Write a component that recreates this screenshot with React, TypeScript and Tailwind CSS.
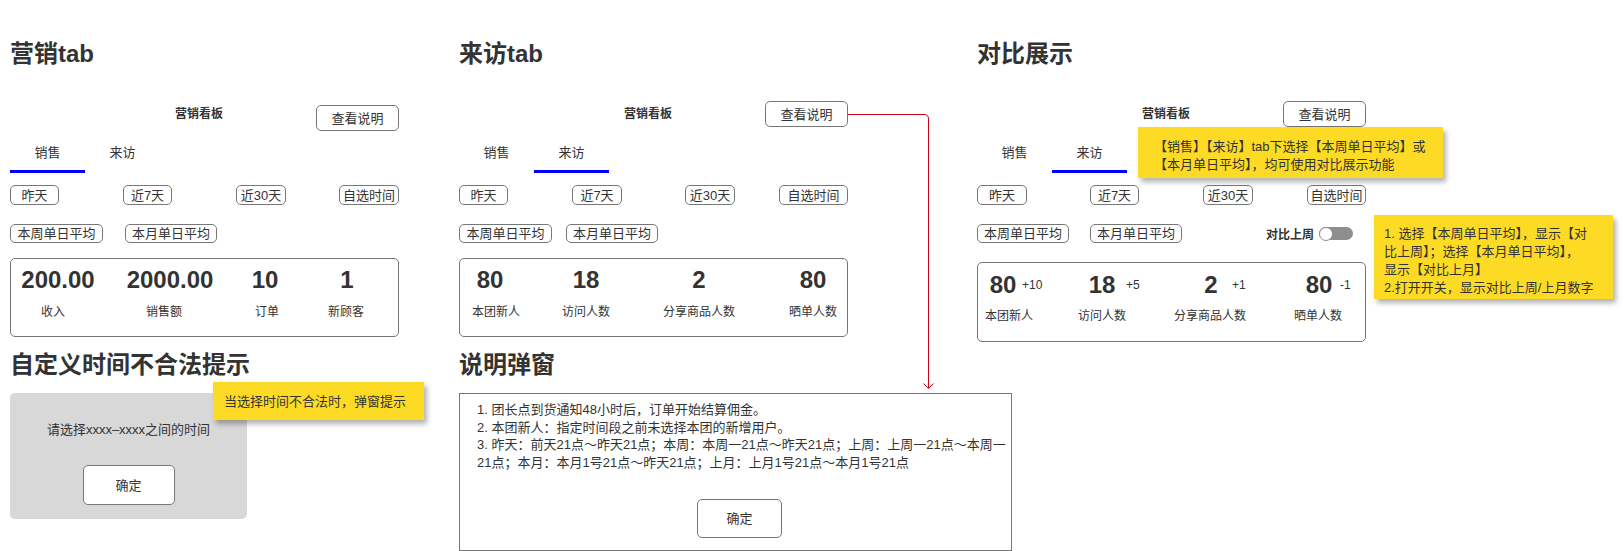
import React from "react";

type P = { className?: string; children?: React.ReactNode };

function Btn({ className = "", children }: P) {
  return (
    <div
      className={`flex shrink-0 items-center justify-center whitespace-nowrap rounded-[5px] border border-[#777] text-[13px] leading-none text-[#333] ${className}`}
    >
      {children}
    </div>
  );
}

function Anchor({ className = "", children }: P) {
  return <div className={`flex w-0 shrink-0 whitespace-nowrap ${className}`}>{children}</div>;
}

function Title({ className = "", children }: P) {
  return (
    <div className={`h-[32px] whitespace-nowrap text-[24px] font-bold leading-[32px] text-[#333] ${className}`}>
      {children}
    </div>
  );
}

function Header({ btnClass }: { btnClass: string }) {
  return (
    <div className="mt-[31px] flex h-[30px] items-start">
      <div className="ml-[165px] mt-[5px] text-[12px] font-semibold leading-4 text-[#333]">营销看板</div>
      <Btn className={`ml-auto h-[26px] w-[83px] ${btnClass}`}>查看说明</Btn>
    </div>
  );
}

function Tabs({ active }: { active: number }) {
  return (
    <div className="mt-[12px] flex h-[30px]">
      {["销售", "来访"].map((t, i) => (
        <div key={t} className="flex w-[75px] flex-col items-center">
          <div className="h-5 text-[13px] leading-5 text-[#333]">{t}</div>
          <div className={`mt-[7px] h-[3px] w-full ${i === active ? "bg-[#0000ff]" : "bg-transparent"}`} />
        </div>
      ))}
    </div>
  );
}

const numRow = "flex h-[28px] items-center text-[24px] font-bold leading-[28px] text-[#333]";
const labRow = "flex h-4 items-center text-[12px] leading-4 text-[#333]";

export default function App() {
  return (
    <div className="relative flex h-[551px] w-[1624px] overflow-hidden bg-white pl-[10px] [font-family:'Liberation_Sans','Noto_Sans_CJK_SC',sans-serif]">
      {/* Column 1 */}
      <div className="flex w-[449px] shrink-0 flex-col">
        <div className="flex w-[389px] flex-col">
          <Title className="mt-[38px]">营销tab</Title>
          <Header btnClass="mt-[4px]" />
          <Tabs active={0} />
          <div className="mt-[12px] flex h-[20px]">
            <Btn className="h-[20px] w-[49px]">昨天</Btn>
            <Btn className="ml-[64px] h-[20px] w-[49px]">近7天</Btn>
            <Btn className="ml-[64px] h-[20px] w-[50px]">近30天</Btn>
            <Btn className="ml-[53px] h-[20px] w-[60px]">自选时间</Btn>
          </div>
          <div className="mt-[19px] flex h-[19px]">
            <Btn className="h-[19px] w-[93px]">本周单日平均</Btn>
            <Btn className="ml-[22px] h-[19px] w-[92px]">本月单日平均</Btn>
          </div>
          <div className="mt-[15px] h-[79px] rounded-[5px] border border-[#777] pt-[7px]">
            <div className={numRow}>
              <Anchor className="ml-[47px] justify-center">200.00</Anchor>
              <Anchor className="ml-[112px] justify-center">2000.00</Anchor>
              <Anchor className="ml-[95px] justify-center">10</Anchor>
              <Anchor className="ml-[82px] justify-center">1</Anchor>
            </div>
            <div className={`mt-[10px] ${labRow}`}>
              <Anchor className="ml-[42px] justify-center">收入</Anchor>
              <Anchor className="ml-[111px] justify-center">销售额</Anchor>
              <Anchor className="ml-[103px] justify-center">订单</Anchor>
              <Anchor className="ml-[79px] justify-center">新顾客</Anchor>
            </div>
          </div>
          <Title className="mt-[12px]">自定义时间不合法提示</Title>
          <div className="mt-[12px] flex h-[126px] w-[237px] flex-col items-center rounded-[5px] bg-[#d8d8d8]">
            <div className="mt-[27px] h-5 whitespace-nowrap text-[13px] leading-5 text-[#333]">请选择xxxx–xxxx之间的时间</div>
            <Btn className="mt-[25px] h-[40px] w-[92px] bg-white">确定</Btn>
          </div>
        </div>
      </div>

      {/* Column 2 */}
      <div className="flex w-[518px] shrink-0 flex-col">
        <div className="flex w-[389px] flex-col">
          <Title className="mt-[38px]">来访tab</Title>
          <Header btnClass="mt-0" />
          <Tabs active={1} />
          <div className="mt-[12px] flex h-[20px]">
            <Btn className="h-[20px] w-[49px]">昨天</Btn>
            <Btn className="ml-[64px] h-[20px] w-[50px]">近7天</Btn>
            <Btn className="ml-[63px] h-[20px] w-[50px]">近30天</Btn>
            <Btn className="ml-[44px] h-[20px] w-[69px]">自选时间</Btn>
          </div>
          <div className="mt-[19px] flex h-[19px]">
            <Btn className="h-[19px] w-[93px]">本周单日平均</Btn>
            <Btn className="ml-[14px] h-[19px] w-[92px]">本月单日平均</Btn>
          </div>
          <div className="mt-[15px] h-[79px] rounded-[5px] border border-[#777] pt-[7px]">
            <div className={numRow}>
              <Anchor className="ml-[30px] justify-center">80</Anchor>
              <Anchor className="ml-[96px] justify-center">18</Anchor>
              <Anchor className="ml-[113px] justify-center">2</Anchor>
              <Anchor className="ml-[114px] justify-center">80</Anchor>
            </div>
            <div className={`mt-[10px] ${labRow}`}>
              <Anchor className="ml-[36px] justify-center">本团新人</Anchor>
              <Anchor className="ml-[90px] justify-center">访问人数</Anchor>
              <Anchor className="ml-[113px] justify-center">分享商品人数</Anchor>
              <Anchor className="ml-[114px] justify-center">晒单人数</Anchor>
            </div>
          </div>
          <Title className="mt-[12px]">说明弹窗</Title>
          <div className="mt-[12px] h-[158px] w-[553px] shrink-0 border border-[#777] bg-white">
            <div className="whitespace-nowrap pl-[17px] pt-[7px] text-[13px] leading-[17.7px] text-[#333]">
              1. 团长点到货通知48小时后，订单开始结算佣金。
              <br />
              2. 本团新人：指定时间段之前未选择本团的新增用户。
              <br />
              3. 昨天：前天21点～昨天21点；本周：本周一21点～昨天21点；上周：上周一21点～本周一
              <br />
              21点；本月：本月1号21点～昨天21点；上月：上月1号21点～本月1号21点
            </div>
            <Btn className="ml-[237px] mt-[27px] h-[39px] w-[85px]">确定</Btn>
          </div>
        </div>
      </div>

      {/* Column 3 */}
      <div className="flex flex-1 flex-col">
        <div className="flex w-[389px] flex-col">
          <Title className="mt-[38px]">对比展示</Title>
          <Header btnClass="mt-0" />
          <Tabs active={1} />
          <div className="mt-[12px] flex h-[20px]">
            <Btn className="h-[20px] w-[50px]">昨天</Btn>
            <Btn className="ml-[63px] h-[20px] w-[49px]">近7天</Btn>
            <Btn className="ml-[64px] h-[20px] w-[50px]">近30天</Btn>
            <Btn className="ml-[54px] h-[20px] w-[59px]">自选时间</Btn>
          </div>
          <div className="mt-[19px] flex h-[19px] items-center">
            <Btn className="h-[19px] w-[92px]">本周单日平均</Btn>
            <Btn className="ml-[21px] h-[19px] w-[92px]">本月单日平均</Btn>
            <div className="ml-[84px] mt-[2px] whitespace-nowrap text-[12px] font-semibold leading-4 text-[#333]">对比上周</div>
            <div className="ml-[5px] flex h-[13px] w-[34px] shrink-0 items-center rounded-full bg-[#8e8e8e]">
              <div className="h-[14px] w-[14px] shrink-0 rounded-full border border-[#8e8e8e] bg-white" />
            </div>
          </div>
          <div className="mt-[19px] h-[80px] rounded-[5px] border border-[#777] pt-[8px]">
            <div className={numRow}>
              <Anchor className="ml-[25px] justify-center">80</Anchor>
              <Anchor className="ml-[19px] justify-start text-[12px] font-normal">+10</Anchor>
              <Anchor className="ml-[80px] justify-center">18</Anchor>
              <Anchor className="ml-[24px] justify-start text-[12px] font-normal">+5</Anchor>
              <Anchor className="ml-[85px] justify-center">2</Anchor>
              <Anchor className="ml-[21px] justify-start text-[12px] font-normal">+1</Anchor>
              <Anchor className="ml-[87px] justify-center">80</Anchor>
              <Anchor className="ml-[21px] justify-start text-[12px] font-normal">-1</Anchor>
            </div>
            <div className={`mt-[9px] ${labRow}`}>
              <Anchor className="ml-[31px] justify-center">本团新人</Anchor>
              <Anchor className="ml-[93px] justify-center">访问人数</Anchor>
              <Anchor className="ml-[108px] justify-center">分享商品人数</Anchor>
              <Anchor className="ml-[108px] justify-center">晒单人数</Anchor>
            </div>
          </div>
        </div>
      </div>

      {/* Connector */}
      <svg className="pointer-events-none absolute left-0 top-0" width="1624" height="551" viewBox="0 0 1624 551">
        <path d="M848 114.5 H924 Q928.5 114.5 928.5 119 V388" fill="none" stroke="#d0021b" strokeWidth="1" />
        <path d="M923.5 383.5 L928.5 388.5 L933.5 383.5" fill="none" stroke="#d0021b" strokeWidth="1" />
      </svg>

      {/* Notes */}
      <div className="absolute left-[213px] top-[382px] flex h-[38px] w-[211px] items-center whitespace-nowrap bg-[#fddb25] pl-[11px] pt-[2px] text-[13px] leading-[18px] text-[#333] shadow-[3px_4px_5px_rgba(0,0,0,0.3)]">
        当选择时间不合法时，弹窗提示
      </div>
      <div className="absolute left-[1138px] top-[127px] h-[51px] w-[305px] whitespace-nowrap bg-[#fddb25] pl-[16px] pt-[11px] text-[13px] leading-[18px] text-[#333] shadow-[3px_4px_5px_rgba(0,0,0,0.3)]">
        【销售】【来访】tab下选择【本周单日平均】或
        <br />
        【本月单日平均】，均可使用对比展示功能
      </div>
      <div className="absolute left-[1374px] top-[215px] h-[84px] w-[239px] whitespace-nowrap bg-[#fddb25] pl-[10px] pt-[10px] text-[13px] leading-[18px] text-[#333] shadow-[3px_4px_5px_rgba(0,0,0,0.3)]">
        1. 选择【本周单日平均】，显示【对
        <br />
        比上周】；选择【本月单日平均】，
        <br />
        显示【对比上月】
        <br />
        2.打开开关，显示对比上周/上月数字
      </div>
    </div>
  );
}
